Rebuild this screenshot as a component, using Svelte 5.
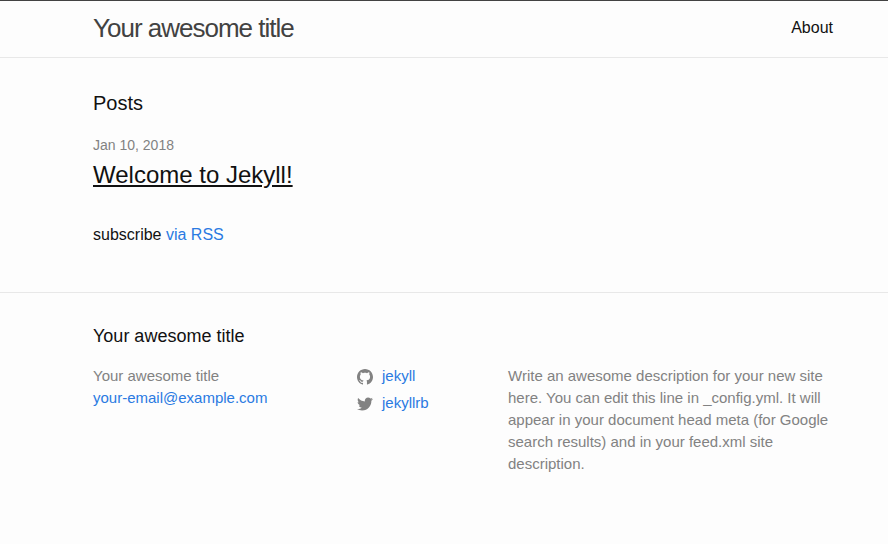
<script>
  const site = {
    title: 'Your awesome title',
    email: 'your-email@example.com',
    description:
      'Write an awesome description for your new site here. You can edit this line in _config.yml. It will appear in your document head meta (for Google search results) and in your feed.xml site description.'
  };
  const posts = [{ date: 'Jan 10, 2018', title: 'Welcome to Jekyll!', url: '#welcome' }];
  const accounts = [
    {
      name: 'jekyll',
      url: '#github',
      path: 'M8 0C3.58 0 0 3.582 0 8c0 3.535 2.292 6.533 5.47 7.59.4.075.547-.172.547-.385 0-.19-.007-.693-.01-1.36-2.226.483-2.695-1.073-2.695-1.073-.364-.924-.89-1.17-.89-1.17-.725-.496.056-.486.056-.486.803.056 1.225.824 1.225.824.714 1.223 1.873.87 2.33.665.072-.517.278-.87.507-1.07-1.777-.2-3.644-.888-3.644-3.953 0-.873.31-1.587.823-2.147-.09-.202-.36-1.015.07-2.117 0 0 .67-.215 2.2.82.64-.178 1.32-.266 2-.27.68.004 1.36.092 2 .27 1.52-1.035 2.19-.82 2.19-.82.43 1.102.16 1.915.08 2.117.51.56.82 1.274.82 2.147 0 3.073-1.87 3.75-3.65 3.947.28.24.54.73.54 1.48 0 1.07-.01 1.93-.01 2.19 0 .21.14.46.55.38C13.71 14.53 16 11.53 16 8c0-4.418-3.582-8-8-8'
    },
    {
      name: 'jekyllrb',
      url: '#twitter',
      path: 'M15.969 3.058c-.586.26-1.217.436-1.878.515.675-.405 1.194-1.045 1.438-1.809-.632.375-1.332.647-2.076.793-.596-.636-1.446-1.033-2.387-1.033-1.806 0-3.27 1.464-3.27 3.27 0 .256.029.506.085.745-2.718-.136-5.127-1.438-6.74-3.416-.281.483-.442 1.045-.442 1.644 0 1.134.577 2.135 1.455 2.722-.536-.017-1.04-.164-1.481-.409v.041c0 1.584 1.127 2.906 2.623 3.206-.274.075-.563.115-.862.115-.211 0-.416-.021-.615-.059.416 1.299 1.624 2.245 3.055 2.271-1.119.877-2.529 1.4-4.061 1.4-.264 0-.524-.016-.78-.046 1.447.928 3.166 1.469 5.013 1.469 6.015 0 9.304-4.983 9.304-9.304 0-.142-.003-.283-.009-.423.639-.461 1.194-1.037 1.632-1.692z'
    }
  ];
</script>

<header>
  <div class="wrapper bar">
    <a class="site-title" href="#home">{site.title}</a>
    <nav><a href="#about">About</a></nav>
  </div>
</header>

<main>
  <div class="wrapper">
    <h2>Posts</h2>
    <ul class="posts">
      {#each posts as post}
        <li>
          <span class="date">{post.date}</span>
          <h3><a href={post.url}>{post.title}</a></h3>
        </li>
      {/each}
    </ul>
    <p>subscribe <a href="#feed">via RSS</a></p>
  </div>
</main>

<footer>
  <div class="wrapper">
    <h2>{site.title}</h2>
    <div class="columns">
      <ul>
        <li>{site.title}</li>
        <li><a href="mailto:{site.email}">{site.email}</a></li>
      </ul>
      <ul class="social">
        {#each accounts as account}
          <li>
            <a href={account.url}>
              <svg viewBox="0 0 16 16" aria-hidden="true"><path d={account.path} /></svg>
              <span>{account.name}</span>
            </a>
          </li>
        {/each}
      </ul>
      <p>{site.description}</p>
    </div>
  </div>
</footer>

<style>
  :global(body) {
    background: #fdfdfd;
    color: #111;
    font: 16px/24px "Liberation Sans", Arial, sans-serif;
  }
  h2, h3, p, ul {
    margin: 0;
    padding: 0;
    font-weight: 400;
    list-style: none;
  }
  a {
    color: #2a7ae2;
    text-decoration: none;
  }
  .wrapper {
    max-width: 740px;
    margin: 0 auto;
    padding: 0 55px 0 93px;
  }
  header {
    border-top: 1px solid #424242;
    border-bottom: 1px solid #e8e8e8;
    padding-bottom: 2px;
  }
  .bar {
    display: flex;
    justify-content: space-between;
    line-height: 54px;
  }
  .site-title {
    font-size: 26px;
    letter-spacing: -1px;
    color: #424242;
  }
  nav a {
    color: #111;
  }
  main {
    padding: 30px 0 45px;
  }
  main h2 {
    font-size: 20px;
    line-height: 30px;
  }
  .posts {
    padding: 15px 0 30px;
  }
  .date {
    display: block;
    font-size: 14px;
    color: #828282;
  }
  h3 {
    font-size: 24px;
    line-height: 36px;
  }
  h3 a {
    color: #111;
    text-decoration: underline;
  }
  footer {
    border-top: 1px solid #e8e8e8;
    padding: 30px 0;
  }
  footer h2 {
    font-size: 18px;
    line-height: 27px;
    margin-bottom: 15px;
  }
  .columns {
    display: grid;
    grid-template-columns: 264fr 151fr 325fr;
    font-size: 15px;
    line-height: 22px;
    color: #828282;
  }
  .social {
    display: flex;
    flex-direction: column;
    gap: 5px;
  }
  .social a {
    display: flex;
    align-items: center;
    gap: 9px;
  }
  svg {
    width: 16px;
    height: 16px;
    margin-top: 2px;
    fill: #828282;
  }
</style>
